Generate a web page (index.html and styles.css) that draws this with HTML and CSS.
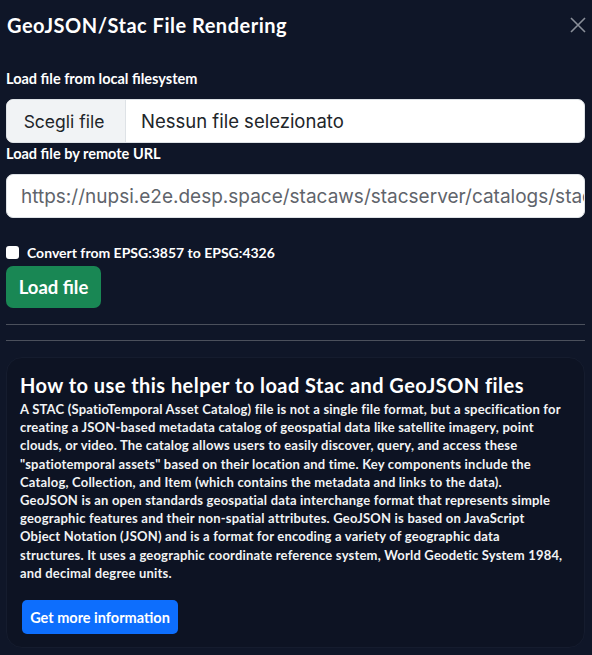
FILE: index.html
```html
<!DOCTYPE html>
<html>
<head>
<meta charset="utf-8">
<link rel="stylesheet" href="styles.css">
</head>
<body>
<div class="modal">
  <div class="header">
    <h5 class="title">GeoJSON/Stac File Rendering</h5>
    <span class="close"><svg width="16" height="16" viewBox="0 0 16 16"><path d="M1 1 L15 15 M15 1 L1 15" stroke="#8a8f99" stroke-width="1.6" fill="none"/></svg></span>
  </div>
  <div class="label first">Load file from local filesystem</div>
  <div class="file-input">
    <span class="file-btn">Scegli file</span>
    <span class="file-name">Nessun file selezionato</span>
  </div>
  <div class="label second">Load file by remote URL</div>
  <div class="url-input">https://nupsi.e2e.desp.space/stacaws/stacserver/catalogs/stac</div>
  <div class="check-row">
    <span class="checkbox"></span>
    <span class="check-label">Convert from EPSG:3857 to EPSG:4326</span>
  </div>
  <button class="load-btn">Load file</button>
  <hr class="rule">
  <hr class="rule rule2">
  <div class="card">
    <h4 class="card-title">How to use this helper to load Stac and GeoJSON files</h4>
    <p class="card-text">A STAC (SpatioTemporal Asset Catalog) file is not a single file format, but a specification for<br>creating a JSON-based metadata catalog of geospatial data like satellite imagery, point<br>clouds, or video. The catalog allows users to easily discover, query, and access these<br>"spatiotemporal assets" based on their location and time. Key components include the<br>Catalog, Collection, and Item (which contains the metadata and links to the data).<br>GeoJSON is an open standards geospatial data interchange format that represents simple<br>geographic features and their non-spatial attributes. GeoJSON is based on JavaScript<br>Object Notation (JSON) and is a format for encoding a variety of geographic data<br>structures. It uses a geographic coordinate reference system, World Geodetic System 1984,<br>and decimal degree units.</p>
    <button class="info-btn">Get more information</button>
  </div>
</div>
</body>
</html>
```
FILE: styles.css
```css
html, body {
  margin: 0;
  padding: 0;
  background: #0f1628;
  color: #ffffff;
  font-family: Lato, "Open Sans", sans-serif;
}
.modal {
  padding: 0 7px 0 6px;
  width: 579px;
}
.header {
  display: flex;
  justify-content: space-between;
  align-items: center;
  height: 50px;
}
.title {
  margin: 0;
  padding-left: 1px;
  font-size: 20px;
  letter-spacing: 0.5px;
  font-weight: 700;
  line-height: 24px;
}
.close {
  display: flex;
  margin-right: -1px;
}
.label {
  font-size: 14.5px;
  font-weight: 700;
  line-height: 20px;
}
.label.first {
  margin-top: 19px;
  margin-bottom: 10px;
}
.label.second {
  margin-top: 1px;
  margin-bottom: 10px;
}
.file-input, .url-input {
  display: flex;
  align-items: center;
  height: 44px;
  box-sizing: border-box;
  background: #fff;
  border: 1px solid #dee2e6;
  border-radius: 7px;
  overflow: hidden;
  font-family: Inter, "Liberation Sans", sans-serif;
  font-size: 18.5px;
  color: #212529;
}
.file-btn {
  display: flex;
  align-items: center;
  justify-content: center;
  height: 100%;
  width: 119px;
  box-sizing: border-box;
  padding: 0 8px 0 4px;
  font-size: 17.5px;
  background: #f1f3f5;
  border-right: 1px solid #dee2e6;
}
.file-name {
  padding-left: 15px;
}
.url-input {
  padding-left: 14px;
  white-space: nowrap;
  font-size: 19px;
  color: #5f646b;
}
.check-row {
  display: flex;
  align-items: center;
  margin-top: 26px;
  height: 16px;
}
.checkbox {
  width: 13px;
  height: 13px;
  background: #fff;
  border-radius: 3px;
  margin-right: 8px;
}
.check-label {
  font-size: 14px;
  font-weight: 700;
}
.load-btn {
  display: block;
  margin-top: 6px;
  height: 42px;
  width: 95px;
  border: 0;
  border-radius: 7px;
  background: #198754;
  color: #fff;
  font-family: Lato, sans-serif;
  font-size: 18.5px;
  font-weight: 700;
  padding: 0;
}
.rule {
  margin: 16px 0 0;
  border: 0;
  border-top: 1px solid #4b505c;
  height: 0;
}
.rule2 {
  margin-top: 15px;
}
.card {
  margin-top: 16px;
  border: 1px solid #151c2e;
  border-radius: 16px;
  background: #0d1323;
  padding: 15px 13px 13px;
  height: 291px;
  box-sizing: border-box;
}
.card-title {
  margin: 0 0 3px;
  font-size: 20px;
  letter-spacing: 0.45px;
  font-weight: 700;
  line-height: 24px;
}
.card-text {
  margin: 0 0 18px;
  font-size: 13px;
  letter-spacing: 0.2px;
  font-weight: 700;
  line-height: 18.2px;
  color: #f2f3f5;
}
.info-btn {
  height: 34px;
  width: 156px;
  padding: 0;
  margin-left: 2px;
  border: 0;
  border-radius: 5px;
  background: #0d6efd;
  color: #fff;
  font-family: Lato, sans-serif;
  font-size: 14.5px;
  font-weight: 700;
}
```
